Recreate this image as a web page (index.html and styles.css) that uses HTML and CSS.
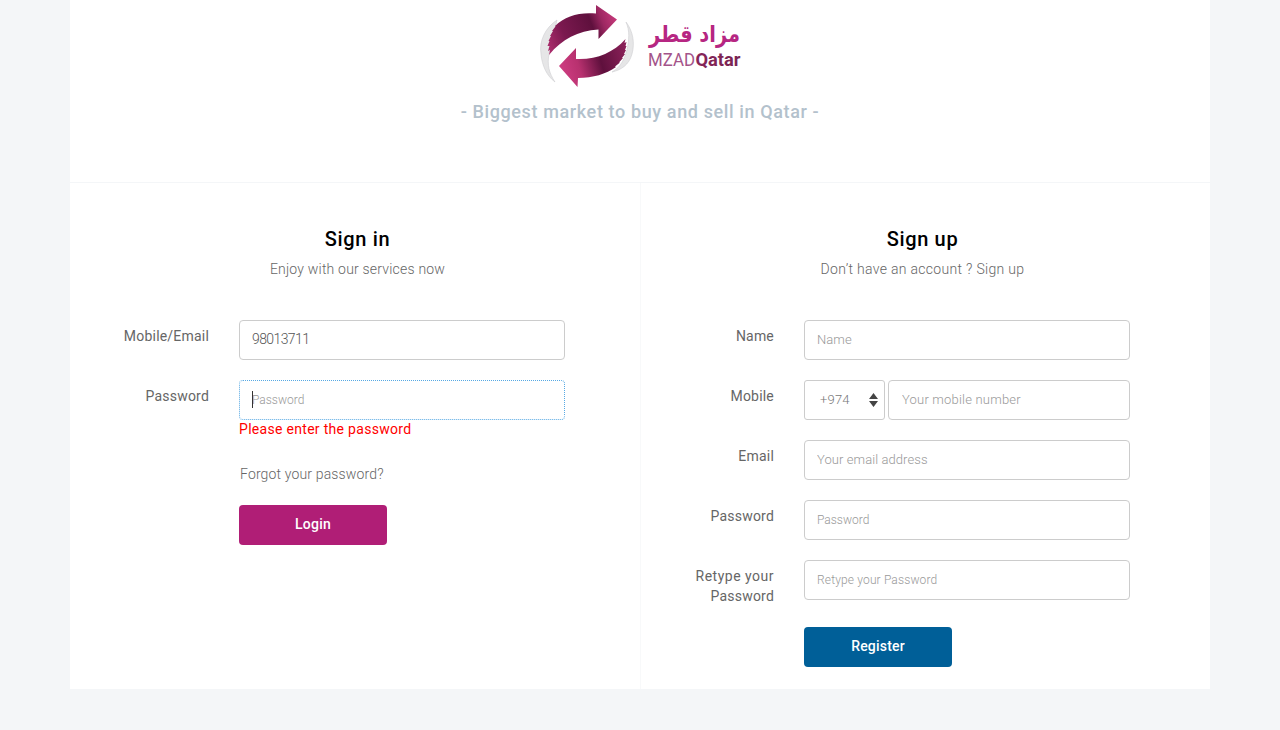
FILE: index.html
```html
<!DOCTYPE html>
<html lang="en">
<head>
<meta charset="utf-8">
<title>MZAD Qatar - Sign in</title>
<link rel="stylesheet" href="styles.css">
</head>
<body>
<main class="page">
  <header class="header">
    <svg class="logo" width="204" height="88" viewBox="538 2 204 88" role="img" aria-label="MZAD Qatar">
      <defs>
        <linearGradient id="top" x1="548" y1="45" x2="617" y2="18" gradientUnits="userSpaceOnUse">
          <stop offset="0" stop-color="#a92c6b"/><stop offset=".25" stop-color="#7b194f"/><stop offset=".65" stop-color="#5f103d"/><stop offset=".8" stop-color="#9d2862"/><stop offset="1" stop-color="#c83a7c"/>
        </linearGradient>
        <linearGradient id="bottom" x1="559" y1="68" x2="626" y2="48" gradientUnits="userSpaceOnUse">
          <stop offset="0" stop-color="#cf3d82"/><stop offset=".28" stop-color="#b8316f"/><stop offset=".6" stop-color="#5f103d"/><stop offset="1" stop-color="#8b2159"/>
        </linearGradient>
        <linearGradient id="word" x1="0" x2="1" y1="0" y2="0">
          <stop offset="0" stop-color="#862459"/><stop offset="1" stop-color="#792451"/>
        </linearGradient>
      </defs>
      <path d="M557 20C545 28 539 41 541 54C542 66 547 76 555 82C549 73 547 65 549 54Z" fill="#e6e6e7" stroke="#cfcfd1" stroke-width=".6"/>
      <path d="M626 22C633 31 635 43 632 54C629 65 621 70 612 72C622 66 624 59 627 50C629 40 630 31 626 22Z" fill="#e6e6e7" stroke="#cfcfd1" stroke-width=".6"/>
      <path d="M596 5L617 19.500L598.500 39V29.500C578 31 562 39 549 55L550 50L548 51L549.500 46L547.500 46L549.500 41L548.500 41L551 36L550 36L553 31L552 31L555.500 26.500L555 26C565 16 579 12 596 13.500Z" fill="url(#top)"/>
      <path d="M559 66L576 48V59C596 60 613 53 625.500 39L624.500 43L626.500 42L625.500 46L626.500 46L625 50L626 50L624 54L625 54L622 58L623 58L619 62.500L620 62.500L615 66.500L616 67C606 74 593 78 578 78L577.500 87Z" fill="url(#bottom)"/>
      <text class="logo-arabic" x="740" y="42" direction="rtl" textLength="91" lengthAdjust="spacingAndGlyphs">مزاد قطر</text>
      <text class="logo-mzad" x="648" y="66" textLength="47" lengthAdjust="spacingAndGlyphs">MZAD</text>
      <text class="logo-qatar" x="695.500" y="66" textLength="45" lengthAdjust="spacingAndGlyphs">Qatar</text>
    </svg>
    <p class="tagline">- Biggest market to buy and sell in Qatar -</p>
  </header>
  <div class="panels">
    <section class="panel signin">
      <h1 class="title">Sign in</h1>
      <p class="subtitle">Enjoy with our services now</p>
      <form class="form">
        <label class="label" for="login">Mobile/Email</label>
        <div class="control"><input class="input value" id="login" value="98013711"></div>
        <label class="label" for="pass">Password</label>
        <div class="control">
          <div class="focus-field"><span class="caret"></span><input class="input focused password" id="pass" type="password" placeholder="Password"></div>
          <p class="error">Please enter the password</p>
        </div>
        <div class="control actions"><a class="forgot">Forgot your password?</a><button class="button login" type="button">Login</button></div>
      </form>
    </section>
    <section class="panel signup">
      <h1 class="title">Sign up</h1>
      <p class="subtitle sub-up">Don’t have an account ? Sign up</p>
      <form class="form">
        <label class="label" for="name">Name</label>
        <div class="control"><input class="input" id="name" placeholder="Name"></div>
        <label class="label" for="mobile">Mobile</label>
        <div class="control mobile">
          <div class="code"><span>+974</span><svg width="9" height="14" viewBox="0 0 9 14"><path d="M4.500 0L9 6H0ZM0 8H9L4.500 14Z" fill="#444"/></svg></div>
          <input class="input number" id="mobile" placeholder="Your mobile number">
        </div>
        <label class="label" for="email">Email</label>
        <div class="control"><input class="input" id="email" placeholder="Your email address"></div>
        <label class="label" for="new-pass">Password</label>
        <div class="control"><input class="input password" id="new-pass" type="password" placeholder="Password"></div>
        <label class="label retype-label" for="retype"><span class="wide">Retype your</span> Password</label>
        <div class="control"><input class="input password retype" id="retype" type="password" placeholder="Retype your Password"></div>
        <div class="control"><button class="button register" type="button">Register</button></div>
      </form>
    </section>
  </div>
</main>
</body>
</html>
```
FILE: styles.css
```css
* { box-sizing: border-box; }
body { margin: 0; background: #f4f6f8; color: #666; font: 400 14px/20px Roboto, "Open Sans", sans-serif; }
p, h1 { margin: 0; }
.page { width: 1140px; height: 689px; margin: 0 auto; background: #fff; }
.header { height: 183px; padding-top: 2px; border-bottom: 1px solid #f4f6f8; display: flex; flex-direction: column; align-items: center; }
.logo { display: block; overflow: visible; }
.logo-arabic { font: 700 23px "DejaVu Sans", sans-serif; fill: #b62682; }
.logo-mzad { font: 400 18px Roboto, sans-serif; fill: #a4548a; }
.logo-qatar { font: 700 18px Roboto, sans-serif; fill: url(#word); }
.tagline { margin-top: 10px; font-size: 18px; line-height: 24px; font-weight: 500; color: #b3c1cc; letter-spacing: .62px; white-space: nowrap; }
.panels { display: grid; grid-template-columns: 570px 570px; height: 506px; }
.panel { padding-top: 44px; }
.signin { padding-left: 40px; padding-right: 35px; }
.signup { padding-left: 34px; padding-right: 40px; border-left: 1px solid #f8f9fa; }
.title { text-align: center; font-size: 20px; line-height: 24px; font-weight: 500; color: #000; letter-spacing: .65px; }
.subtitle { margin-top: 8px; text-align: center; font-weight: 300; letter-spacing: .2px; }
.sub-up { letter-spacing: .31px; }
.form { margin-top: 41px; display: grid; grid-template-columns: 99px 326px; column-gap: 30px; row-gap: 20px; }
.label { padding: 6px 0 1px; text-align: right; letter-spacing: .2px; }
.wide { letter-spacing: .5px; }
.control { grid-column: 2; }
.input { display: block; width: 100%; height: 40px; padding: 0 12px 2px; border: 1px solid #ccc; border-radius: 4px; background: #fff; color: #555; font: 300 14px/20px Roboto, sans-serif; outline: 0; }
.value { letter-spacing: -.6px; }
.input::placeholder { color: #999; font-size: 13px; opacity: 1; letter-spacing: .08px; }
.password::placeholder { font-size: 12px; letter-spacing: 0; }
.retype::placeholder { letter-spacing: .15px; }
.focus-field { position: relative; }
.focused { border: 1px dotted #57a9e4; }
.caret { position: absolute; left: 13px; top: 11px; width: 1px; height: 17px; background: #333; }
.error { margin: -1px 0 1px; color: #f00; letter-spacing: .3px; }
.actions { padding-top: 4px; }
.forgot { display: block; margin-left: 1px; font-weight: 300; letter-spacing: .15px; }
.button { display: block; width: 148px; height: 40px; padding: 0 0 2px; border: 0; border-radius: 4px; color: #fff; font: 500 14px/20px Roboto, sans-serif; letter-spacing: .2px; }
.login { margin-top: 21px; background: #b01e76; }
.register { background: #005f98; }
.mobile { display: grid; grid-template-columns: 81px 242px; column-gap: 3px; }
.code { display: flex; align-items: center; justify-content: space-between; height: 40px; padding: 0 6px 0 15px; border: 1px solid #ccc; border-radius: 3px; font-size: 13px; font-weight: 300; color: #777; letter-spacing: .2px; }
.number { padding-left: 13px; }
.number::placeholder { letter-spacing: .2px; }
```
